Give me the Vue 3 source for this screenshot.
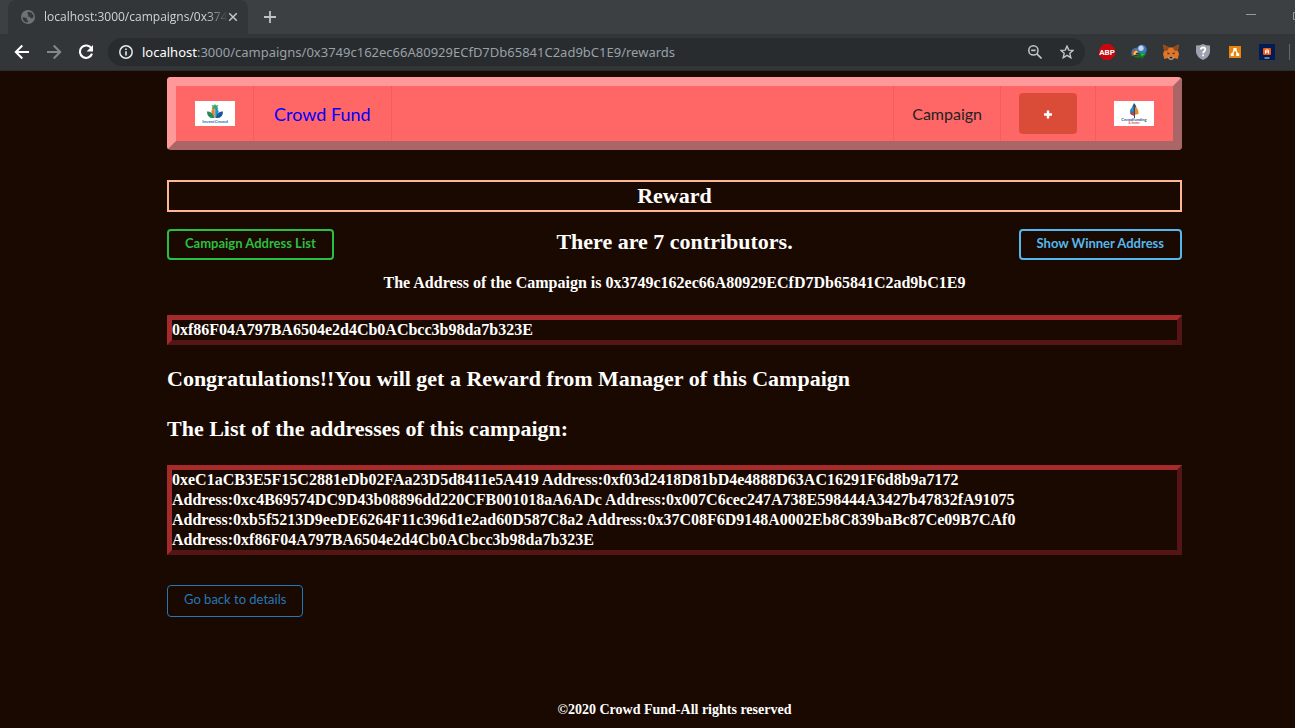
<script setup>
const url = '0x3749c162ec66A80929ECfD7Db65841C2ad9bC1E9'
const winner = '0xf86F04A797BA6504e2d4Cb0ACbcc3b98da7b323E'
const addresses = [
  '0xeC1aCB3E5F15C2881eDb02FAa23D5d8411e5A419',
  '0xf03d2418D81bD4e4888D63AC16291F6d8b9a7172',
  '0xc4B69574DC9D43b08896dd220CFB001018aA6ADc',
  '0x007C6cec247A738E598444A3427b47832fA91075',
  '0xb5f5213D9eeDE6264F11c396d1e2ad60D587C8a2',
  '0x37C08F6D9148A0002Eb8C839baBc87Ce09B7CAf0',
  winner,
]
</script>

<template>
  <div class="window">
    <header class="chrome">
      <div class="tabs">
        <div class="tab">
          <svg class="globe" viewBox="0 0 14 14" aria-hidden="true">
            <circle cx="7" cy="7" r="7" fill="#6f7377" />
            <path d="M1.5 7.2 4.2 7.6 6.2 8.6 5.6 10.2 7.4 10.6 6.6 12.6 4 12 2 9.8ZM7.4 1.8 6 3.4 7.6 4.8 6.4 6.4 8.6 6.8 10 8.4 12.4 7.8 12.4 5.2 10.6 2.8Z" fill="#35393c" />
          </svg>
          <span class="tab-title">localhost:3000/campaigns/0x374</span>
          <button class="icon-btn close" aria-label="Close tab">
            <svg viewBox="0 0 10 10"><path d="M1.2 1.2 8.8 8.8M8.8 1.2 1.2 8.8" stroke="#c3c6c9" stroke-width="1.5" /></svg>
          </button>
        </div>
        <button class="icon-btn new" aria-label="New tab">
          <svg viewBox="0 0 12 12"><path d="M6 0V12M0 6H12" stroke="#c0c3c5" stroke-width="1.8" /></svg>
        </button>
        <div class="controls">
          <button class="icon-btn" aria-label="Minimize">
            <svg viewBox="0 0 10 10"><path d="M0 4.5H10" stroke="#989b9d" /></svg>
          </button>
          <button class="icon-btn" aria-label="Restore">
            <svg viewBox="0 0 10 10"><path d="M.5 2.5H7.5V9.5H.5ZM2.5 2.5V.5H9.5V7.5H7.5" fill="none" stroke="#989b9d" /></svg>
          </button>
        </div>
      </div>
      <div class="toolbar">
        <button class="icon-btn nav-icon" aria-label="Back">
          <svg viewBox="0 0 16 16"><path d="M15 8H2M8.3 1.5 1.8 8 8.3 14.5" fill="none" stroke="#fff" stroke-width="2" /></svg>
        </button>
        <button class="icon-btn nav-icon" aria-label="Forward">
          <svg viewBox="0 0 16 16"><path d="M1 8H14M7.7 1.5 14.2 8 7.7 14.5" fill="none" stroke="#85888a" stroke-width="2" /></svg>
        </button>
        <button class="icon-btn nav-icon" aria-label="Reload">
          <svg viewBox="0 0 16 16"><path d="M13.4 4.5A6.2 6.2 0 1 0 14 9.6" fill="none" stroke="#fff" stroke-width="2.1" /><path d="M15 1V7.4H8.6Z" fill="#fff" /></svg>
        </button>
        <div class="omnibox">
          <svg class="info" viewBox="0 0 14 14" aria-hidden="true"><circle cx="7" cy="7" r="6.2" fill="none" stroke="#e8eaed" stroke-width="1.5" /><path d="M7 6.2V10.5M7 3.4V5" stroke="#e8eaed" stroke-width="1.6" /></svg>
          <span class="url"><b>localhost</b>:3000/campaigns/{{ url }}/rewards</span>
          <button class="icon-btn tool" aria-label="Zoom">
            <svg viewBox="0 0 14 14"><circle cx="5.4" cy="5.4" r="4.6" fill="none" stroke="#c3c6c9" stroke-width="1.5" /><path d="M8.6 8.6 13.5 13.5M3.2 5.4H7.6" stroke="#c3c6c9" stroke-width="1.6" /></svg>
          </button>
          <button class="icon-btn tool" aria-label="Bookmark">
            <svg viewBox="0 0 14 14"><path d="M7 1.1 8.7 5.1 13.1 5.4 9.8 8.3 10.8 12.7 7 10.3 3.2 12.7 4.2 8.3 .9 5.4 5.3 5.1Z" fill="none" stroke="#c3c6c9" stroke-width="1.4" /></svg>
          </button>
        </div>
        <div class="extensions">
          <button class="icon-btn" aria-label="ABP">
            <svg viewBox="0 0 16 16"><path d="M4.7 0H11.3L16 4.7V11.3L11.3 16H4.7L0 11.3V4.7Z" fill="#c9080d" /><text x="8" y="11" text-anchor="middle" font-size="8" font-weight="700" font-family="Roboto, sans-serif" fill="#fff">ABP</text></svg>
          </button>
          <button class="icon-btn" aria-label="Download manager">
            <svg viewBox="0 0 16 16"><path d="M1 12C-1.5 6 3 2.5 8 4L7 10Z" fill="#2878b8" /><path d="M1.8 11.5C0 7 4 4.4 8 5.5L7 10Z" fill="#e54b2c" /><path d="M2.8 11C2 8 5 6 8 7L8 10.5Z" fill="#f5d83b" /><path d="M4.4 10.6C4.4 9 6 8 8 8.6V10.6Z" fill="#24303a" /><circle cx="10.8" cy="5.6" r="4.9" fill="#3f78bd" /><circle cx="10" cy="4.2" r="2.6" fill="#bfd9f0" /><path d="M2 11.4Q5 13 9 10.5L8 8.5 15.8 9.4 10.5 15.6 10.5 13Q5 15 2 11.4Z" fill="#107a25" /><path d="M9 9.4 14.4 9.8 11 12Z" fill="#37c13f" /></svg>
          </button>
          <button class="icon-btn" aria-label="MetaMask">
            <svg viewBox="0 0 16 16"><path d="M.4.6 6 3.6H10L15.6.6 15 7 16 10 14.7 15 11 14 9.5 15.4H6.5L5 14 1.3 15 0 10 1 7Z" fill="#e27625" /><path d="M.4.6 6 3.6 4.8 6.5 1 7ZM15.6.6 10 3.6 11.2 6.5 15 7Z" fill="#93481d" /><path d="M4.2 8.3 7 9.5 4.8 10.4ZM11.8 8.3 9 9.5 11.2 10.4Z" fill="#253447" /><path d="M5 13.4 6.6 12.4H9.4L11 13.4 9.5 15.4H6.5Z" fill="#c8b8a8" /><path d="M6.5 12.8H9.5L9.6 14.4H6.4Z" fill="#222" /></svg>
          </button>
          <button class="icon-btn" aria-label="Site check">
            <svg viewBox="0 0 16 16"><path d="M8 0Q11 1.5 15 1.5V8Q14.5 13 8 16 1.5 13 1 8V1.5Q5 1.5 8 0Z" fill="#9ba1ae" /><path d="M5.8 5.5C5.8 2.8 10.3 2.9 10.3 5.5 10.3 7.3 8.1 7.2 8.1 9.3" fill="none" stroke="#fff" stroke-width="1.8" /><path d="M7.2 10.4H9V12.2H7.2Z" fill="#fff" /></svg>
          </button>
          <button class="icon-btn" aria-label="Diagrams">
            <svg viewBox="0 0 16 16"><path d="M2 2H14V14H2Z" fill="#e8830c" /><path d="M8 5 5 10.5M8 5 11 10.5" stroke="#fff" stroke-width="1.3" /><path d="M6.4 4H9.6V7H6.4ZM3.8 9.2H6.8V12H3.8ZM9.2 9.2H12.2V12H9.2Z" fill="#fff" /></svg>
          </button>
          <button class="icon-btn" aria-label="Xampp">
            <svg viewBox="0 0 16 16"><path d="M0 0H16V16H0Z" fill="#031b55" /><rect x="4" y="4" width="8" height="7" rx="1" fill="#f15a16" /><path d="M6 6.4 7 5.6H9L10 6.4V9.6H9V8.6H7V9.6H6Z" fill="#fff" /><path d="M7.2 6.6H8.8V7.6H7.2Z" fill="#f15a16" /><path d="M5.5 14H10.5" stroke="#b5bdd0" stroke-width="1.2" /></svg>
          </button>
          <i class="divider"></i>
        </div>
      </div>
    </header>

    <main class="page">
      <nav class="menu">
        <a class="item logo-item" href="#" aria-label="Home">
          <svg class="logo" viewBox="0 0 40 25"><path d="M0 0H40V25H0Z" fill="#fff" /><path d="M20 3 21 4.5 23.3 4 22.4 6 23.3 8H16.7L17.6 6 16.7 4 19 4.5Z" fill="#35a866" /><path d="M19.8 17Q14.5 12 17.2 8.5L19.8 6.5Z" fill="#f07d2c" /><path d="M20.2 17Q25.5 12 22.8 8.5L20.2 6.5Z" fill="#1499d3" /><path d="M19.5 17Q12 18 12 10.5 17 9.5 19.5 17Z" fill="#238a5b" /><path d="M20.5 17Q28 18 28 10.5 23 9.5 20.5 17Z" fill="#1d559b" /><text x="20" y="21.8" text-anchor="middle" font-size="4.5" font-weight="700" font-family="Lato, sans-serif" fill="#286fae">InvestCrowd</text></svg>
        </a>
        <a class="item brand" href="#">Crowd Fund</a>
        <span class="spacer"></span>
        <a class="item campaign" href="#">Campaign</a>
        <div class="item add-item">
          <button class="add" aria-label="Add campaign"><svg viewBox="0 0 10 10"><path d="M5 1.5V9.5M1 5.5H9" stroke="#fff" stroke-width="2.4" /></svg></button>
        </div>
        <a class="item logo-item" href="#" aria-label="Crowdfunding">
          <svg class="logo" viewBox="0 0 40 25"><path d="M0 0H40V25H0Z" fill="#fff" /><path d="M20 2Q23 5 22.4 9L20 14Q16 8 20 2Z" fill="#38598e" /><path d="M19.5 6Q15 7 16 13L19.5 14Z" fill="#179ed0" /><path d="M20.5 6Q25 7 24.5 13L20.5 14Z" fill="#e98b24" /><path d="M17 10Q20 10 20 15L17 13.5Z" fill="#cf3447" /><path d="M20.5 3.5V17" stroke="#38456c" /><text x="20" y="20.2" text-anchor="middle" font-size="4" font-weight="700" font-family="Lato, sans-serif" fill="#31548b">Crowdfunding</text><text x="20" y="23.2" text-anchor="middle" font-size="3" font-weight="700" font-family="Lato, sans-serif" fill="#d04737">&amp; Invest</text></svg>
        </a>
      </nav>

      <h1 class="title">Reward</h1>
      <div class="actions">
        <div class="side"><button class="btn green">Campaign Address List</button></div>
        <h2>There are 7 contributors.</h2>
        <div class="side end"><button class="btn blue">Show Winner Address</button></div>
      </div>
      <h3 class="address">The Address of the Campaign is {{ url }}</h3>
      <div class="box">{{ winner }}</div>
      <h2 class="message congrats">Congratulations!!You will get a Reward from Manager of this Campaign</h2>
      <h2 class="message">The List of the addresses of this campaign:</h2>
      <div class="box">{{ addresses.join(' Address:') }}</div>
      <button class="btn details">Go back to details</button>
      <footer>©2020 Crowd Fund-All rights reserved</footer>
    </main>
  </div>
</template>

<style>
body { background: #1a0900; }
</style>

<style scoped>
* { box-sizing: border-box; }
.window { min-height: 100vh; overflow: hidden; background: #1a0900; color: #fff; font-family: "Liberation Serif", serif; }
button { padding: 0; border: 0; background: none; font: inherit; cursor: pointer; }
svg { display: block; }
.icon-btn { flex: none; width: 16px; height: 16px; }
.icon-btn svg { width: 100%; height: 100%; }

.chrome { background: #323639; border-bottom: 1px solid #292d2f; font-family: "Noto Sans", "Open Sans", sans-serif; }
.tabs { display: flex; align-items: center; height: 34px; padding-left: 8px; background: #3c4043; }
.tab { display: flex; align-items: center; width: 240px; height: 34px; padding: 0 11px 0 13px; border-radius: 8px 8px 0 0; background: #323639; }
.globe { flex: none; width: 14px; height: 14px; margin-right: 9px; }
.tab-title { flex: 1; white-space: nowrap; font-family: "Open Sans", sans-serif; font-size: 12px; line-height: 18px; color: #d0d3d5; mask-image: linear-gradient(to right, #000 88%, transparent); }
.close { width: 10px; height: 10px; }
.new { width: 12px; height: 12px; margin-left: 16px; }
.controls { display: flex; gap: 37px; margin: -4px -8px 0 auto; }
.controls .icon-btn { width: 10px; height: 10px; }
.toolbar { display: flex; align-items: center; height: 36px; padding-left: 14px; }
.nav-icon { margin-right: 16px; }
.omnibox { display: flex; flex: 1; align-items: center; height: 28px; margin-left: -2px; padding: 0 11px; border-radius: 14px; background: #282c2f; }
.info { flex: none; width: 14px; height: 14px; margin-right: 9px; }
.url { flex: 1; overflow: hidden; white-space: nowrap; font-size: 13px; line-height: 20px; color: #9aa0a6; }
.url b { font-weight: 400; color: #fff; }
.tool { width: 14px; height: 14px; margin-left: 18px; }
.extensions { display: flex; gap: 16px; margin-left: 14px; }
.divider { width: 1px; height: 16px; margin: 0 5px 0 -2px; background: #65696b; }

.page { padding: 6px 113px 8px 167px; }
.menu { display: flex; align-items: stretch; border: 9px solid; border-color: #f99 #a66 #a66 #f99; border-radius: 4px; background: #f66; font-family: Lato, sans-serif; }
.item { display: flex; align-items: center; padding: 0 18px; border-right: 1px solid #ef5f5f; color: #222; font-size: 16px; text-decoration: none; }
.item:last-child { padding-right: 19px; border-right: 0; }
.logo-item:first-child { padding-left: 19px; }
.logo { width: 40px; height: 25px; }
.brand { padding: 0 20px; color: #00f; font-size: 18px; }
.spacer { flex: 1; border-right: 1px solid #ef5f5f; }
.add-item { padding-top: 7px; padding-bottom: 7px; }
.add { display: grid; place-items: center; width: 58px; height: 41px; border-radius: 4px; background: #db4c38; }
.add svg { width: 10px; height: 10px; }

h1, h2, h3 { margin: 0; font-size: 22px; line-height: 28px; font-weight: 700; }
.title { margin-top: 30px; border: 2px solid #ffb694; text-align: center; }
.actions { display: flex; align-items: flex-start; margin-top: 17px; }
.actions h2 { line-height: 26px; }
.side { flex: 1; }
.end { text-align: right; }
.btn { display: inline-block; height: 31px; padding: 0 16px 4px; border: 2px solid; border-radius: 4px; font-family: Lato, sans-serif; font-size: 13px; font-weight: 700; line-height: 18px; }
.green { color: #2abf40; }
.blue { color: #54b8ee; }
h3 { font-size: 16px; line-height: 20px; }
.address { margin-top: 13px; text-align: center; }
.box { margin-top: 22px; border: 5px solid; border-color: #a52a2a #551515 #551515 #a52a2a; font-size: 16px; font-weight: 700; line-height: 20px; }
.message { margin-top: 22px; }
.congrats { margin-top: 20px; }
.details { display: block; height: 32px; margin-top: 30px; border-width: 1px; color: #2478b8; font-weight: 400; }
footer { margin-top: 83px; text-align: center; font-size: 14px; font-weight: 700; line-height: 20px; }
</style>
